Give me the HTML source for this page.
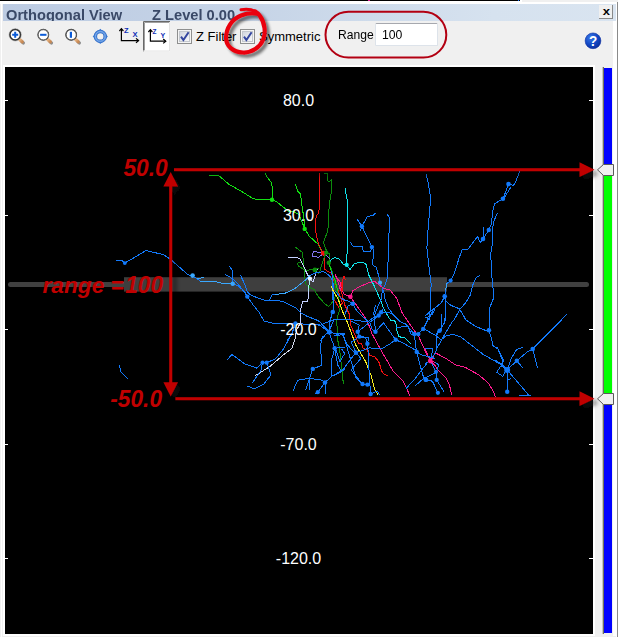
<!DOCTYPE html>
<html>
<head>
<meta charset="utf-8">
<title>Orthogonal View</title>
<style>
html,body{margin:0;padding:0;}
body{width:618px;height:637px;overflow:hidden;background:#f0f0f0;font-family:"Liberation Sans",sans-serif;position:relative;}
#topline{position:absolute;left:0;top:0;width:520px;height:1px;background:#000;}
#topgrey{position:absolute;left:522px;top:0;width:96px;height:2px;background:#f0f0f0;}
#topwhite{position:absolute;left:0;top:0;width:618px;height:4px;background:#fff;}
#frameL{position:absolute;left:1px;top:1px;width:1px;height:636px;background:#fff;}
#frameR{position:absolute;left:617px;top:2px;width:1px;height:635px;background:#8a8a8a;}
#frameR2{position:absolute;left:616px;top:2px;width:1px;height:635px;background:#fff;}
#frameR0{position:absolute;left:613px;top:21px;width:4px;height:615px;background:#fff;}
#title{position:absolute;left:3px;top:4px;width:613px;height:17px;overflow:hidden;
 background:linear-gradient(to right,#bccbe2 0%,#c6d4e7 40%,#d6e2ef 80%,#d9e4f0 100%);}
#title span{position:absolute;top:2px;font-weight:bold;font-size:15.2px;line-height:17px;color:#3a4967;white-space:nowrap;transform:scaleX(0.965);transform-origin:0 0;}
#closeb{position:absolute;left:599px;top:5px;width:14px;height:14px;background:#f0f0f0;border-right:1px solid #8a8a8a;border-bottom:1px solid #8a8a8a;box-sizing:border-box;}
#canvasframe{position:absolute;left:3px;top:65px;width:592px;height:571px;background:#fff;}
#canvas{position:absolute;left:5px;top:67px;width:588px;height:567px;background:#000;}
.tb{position:absolute;font-size:13px;color:#000;white-space:nowrap;}
.cb{position:absolute;width:13px;height:13px;box-sizing:border-box;border:1px solid #8e8f8f;background:#f4f4f4;box-shadow:inset 0 0 0 1px #f4f4f4, inset 0 0 0 2px #c9ccd0;}
#rangein{position:absolute;left:375px;top:23px;width:62.5px;height:23px;box-sizing:border-box;border:1px solid #dde3ea;border-top-color:#a6a8ae;border-radius:1.5px;background:#fff;}
#overlay{position:absolute;left:0;top:0;}
</style>
</head>
<body>
<div id="topwhite"></div>
<div id="topline"></div>
<div id="topgrey"></div>
<div id="title"><span style="left:2.5px">Orthogonal View</span><span style="left:148.5px">Z Level 0.00</span></div>
<div id="closeb"></div>
<div id="frameL"></div>
<div id="frameR0"></div>
<div id="frameR"></div>
<div id="frameR2"></div>

<div class="tb" style="left:196px;top:29px;">Z Filter</div>
<div class="tb" style="left:259px;top:29px;">Symmetric</div>
<div class="tb" style="left:338px;top:27px;transform:scaleX(0.93);transform-origin:0 0;">Range</div>
<div id="rangein"><div class="tb" style="left:5.5px;top:3px;transform:scaleX(0.94);transform-origin:0 0;">100</div></div>

<div id="canvasframe"></div>
<div id="canvas"></div>

<svg id="overlay" width="618" height="637" viewBox="0 0 618 637">
<!-- TOOLBAR ICONS -->
<defs>
 <linearGradient id="hg" x1="0" y1="0" x2="1" y2="1"><stop offset="0" stop-color="#e9b98a"/><stop offset="1" stop-color="#c88a55"/></linearGradient>
 <radialGradient id="helpg" cx="0.35" cy="0.3" r="0.8"><stop offset="0" stop-color="#3a78e8"/><stop offset="0.55" stop-color="#1248c4"/><stop offset="1" stop-color="#0a2a98"/></radialGradient>
 <linearGradient id="cbg" x1="0" y1="0" x2="1" y2="1"><stop offset="0" stop-color="#cfd4dd"/><stop offset="1" stop-color="#fbfbfc"/></linearGradient>
 <filter id="sh" x="-20%" y="-20%" width="150%" height="150%"><feGaussianBlur in="SourceAlpha" stdDeviation="1.6"/><feOffset dx="3" dy="3"/><feComponentTransfer><feFuncA type="linear" slope="0.55"/></feComponentTransfer><feMerge><feMergeNode/><feMergeNode in="SourceGraphic"/></feMerge></filter>
 <filter id="sh2" x="-5%" y="-5%" width="112%" height="112%"><feGaussianBlur in="SourceAlpha" stdDeviation="2.2"/><feOffset dx="4" dy="4" result="b"/><feFlood flood-color="#141414" flood-opacity="0.55"/><feComposite in2="b" operator="in"/><feMerge><feMergeNode/><feMergeNode in="SourceGraphic"/></feMerge></filter>
 <g id="mag">
  <path d="M6.6 6.8 L8.2 8.2" stroke="#8d8d8d" stroke-width="3.2" stroke-linecap="round"/>
  <path d="M4.2 4.4 L7 7" stroke="url(#hg)" stroke-width="3.3" stroke-linecap="round"/>
  <circle cx="0" cy="0" r="5.2" fill="#fff" stroke="#3c3c3c" stroke-width="1.5"/>
 </g>
</defs>
<g id="icons">
 <g transform="translate(15.2 34.8)"><use href="#mag"/><circle r="5.3" fill="#fff" stroke="#303030" stroke-width="1.5"/><circle r="6.2" fill="none" stroke="#9a9a9a" stroke-width="0.5"/><path d="M-3 0H3M0 -3V3" stroke="#0b5bd7" stroke-width="2"/></g>
 <g transform="translate(43.3 34.8)"><use href="#mag"/><circle r="5.1" fill="#fff" stroke="#666" stroke-width="1"/><path d="M-3.2 0H3.2" stroke="#0b5bd7" stroke-width="2"/></g>
 <g transform="translate(71.2 34.8)"><use href="#mag"/><circle r="5.1" fill="#fff" stroke="#555" stroke-width="1"/><path d="M-0.3 -3V3" stroke="#0b5bd7" stroke-width="2.2"/></g>
 <g transform="translate(100.3 36.4)">
  <path d="M0 -7.6 L2.6 -5 L-2.6 -5Z M0 7.6 L2.6 5 L-2.6 5Z M-7.6 0 L-5 -2.6 L-5 2.6Z M7.6 0 L5 -2.6 L5 2.6Z" fill="#3f7fd6"/>
  <circle r="4.9" fill="none" stroke="#2f68c2" stroke-width="3.4"/>
  <circle r="4.9" fill="none" stroke="#4a88dc" stroke-width="2.4"/>
  <circle r="4.9" fill="none" stroke="#86b0ea" stroke-width="0.9"/>
 </g>
 <!-- ZX axes -->
 <g stroke="#000" stroke-width="1.2" fill="none">
  <path d="M121.4 29 V40.6 H138.4"/>
  <path d="M119.4 31 L121.4 28.6 L123.4 31"/>
  <path d="M136 38.4 L138.6 40.6 L136 42.8"/>
 </g>
 <g font-family="'Liberation Sans',sans-serif" font-weight="bold" fill="#1030b8">
  <text x="124" y="33" font-size="7.5">Z</text>
  <text x="132.6" y="37.2" font-size="7.6">X</text>
 </g>
 <!-- ZY selected -->
 <rect x="143" y="21" width="27" height="30.5" fill="#fff"/>
 <path d="M143.5 51.5 V21.5 H170" stroke="#696969" stroke-width="1" fill="none"/>
 <path d="M144.5 50.5 V22.5 H169" stroke="#a0a0a0" stroke-width="1" fill="none"/>
 <path d="M143 51 H169.5 V22" stroke="#e3e3e3" stroke-width="1" fill="none"/>
 <g stroke="#000" stroke-width="1.2" fill="none">
  <path d="M150.4 30 V41.2 H165.6"/>
  <path d="M148.4 32 L150.4 29.6 L152.4 32"/>
  <path d="M163.2 39 L165.8 41.2 L163.2 43.4"/>
 </g>
 <g font-family="'Liberation Sans',sans-serif" font-weight="bold" fill="#1030b8">
  <text x="152.6" y="33.6" font-size="6.5">Z</text>
  <text x="160.6" y="38.2" font-size="7">Y</text>
 </g>
 <!-- checkboxes -->
 <g id="cb1">
  <rect x="177.5" y="29.5" width="14" height="14" fill="#f4f4f4" stroke="#8e8f8f"/>
  <rect x="179.5" y="31.5" width="10" height="10" fill="url(#cbg)" stroke="#c4c8ce" stroke-width="1"/>
  <path d="M181 36.6 L183.4 40 L188.6 32.2" stroke="#35479f" stroke-width="2" fill="none"/>
 </g>
 <g id="cb2">
  <rect x="240.5" y="29.5" width="14" height="14" fill="#f4f4f4" stroke="#8e8f8f"/>
  <rect x="242.5" y="31.5" width="10" height="10" fill="url(#cbg)" stroke="#c4c8ce" stroke-width="1"/>
  <path d="M244 36.6 L246.4 40 L251.6 32.2" stroke="#35479f" stroke-width="2" fill="none"/>
 </g>
 <!-- help -->
 <circle cx="593" cy="40.8" r="8.6" fill="#fbfbfb"/>
 <circle cx="593" cy="40.8" r="7.9" fill="url(#helpg)" stroke="#0d2f9c" stroke-width="0.6"/>
 <text transform="translate(593.1 46.3) scale(0.9 1)" font-family="'Liberation Sans',sans-serif" font-weight="bold" font-size="15" fill="#fff" text-anchor="middle">?</text>
 <!-- close x -->
 <text transform="translate(606.5 15) scale(1.13 1)" font-family="'Liberation Sans',sans-serif" font-weight="bold" font-size="11.6" fill="#000" text-anchor="middle">x</text>
 <!-- red annotations in toolbar -->
 <g filter="url(#sh)" fill="none" stroke="#ea0010" stroke-linecap="round" stroke-linejoin="round">
  <path d="M241 9.7 C246 8.8 251 9 255 11.4" stroke-width="3"/>
  <path d="M255 11.4 C257 12.6 258.8 14.2 260 16 C265 23 266 33 263 40 C260 47 252 53 243 52.5 C233 52 226 46 226 38 C226 28 232 19 241 15.5 C247 13.2 252 12.6 257 13.8" stroke-width="4.2"/>
 </g>
 <rect x="325.5" y="11.8" width="120.8" height="45.8" rx="22.9" ry="22.9" fill="none" stroke="#b30012" stroke-width="2"/>
 <rect x="368" y="0" width="2" height="1" fill="#e0209a"/><rect x="518" y="0" width="1" height="1" fill="#1070ff"/>
</g>
<!-- SLIDER -->
<g id="slider">
 <rect x="602" y="67" width="1" height="567" fill="#c4c4c4"/><rect x="603" y="67" width="1" height="567" fill="#6c6c5c"/>
 <rect x="604" y="68" width="8" height="565" fill="#0000ff"/>
 <rect x="604" y="170" width="8" height="229" fill="#00ff00"/>
 <path d="M597.5 169.8 L603.5 164.5 H613.5 V175.5 H603.5 Z" fill="#f0f0f0" stroke="#5a5a5a" stroke-width="1"/>
 <path d="M597.5 398.8 L603.5 393.5 H613.5 V404.5 H603.5 Z" fill="#f0f0f0" stroke="#5a5a5a" stroke-width="1"/>
</g>
<!-- BAND -->
<g id="band">
 <line x1="10.5" y1="284.5" x2="586.5" y2="284.5" stroke="#404040" stroke-width="5" stroke-linecap="round"/>
 <rect x="124" y="277.2" width="323" height="14.4" fill="#3e3e3e"/>
</g>
<!-- TRACES -->
<g id="traces" fill="none" stroke-width="1" stroke-linejoin="round" stroke-linecap="butt" shape-rendering="crispEdges">
<path d="M208.9 175.5 L218.6 175.5 L229.1 184.4 L242.0 191.7 L251.8 197.8 L255.8 199.3 L269.6 199.3 L272.0 199.8 L276.0 201.4 L285.0 208.4 L288.2 211.1 L293.9 211.6 L298.7 214.5 L302.0 222.0 L304.7 228.9" stroke="#12e012"/>
<path d="M272.0 199.8 L272.3 187.6 L270.9 182.0 L267.2 177.1 L265.0 173.1" stroke="#12e012"/>
<path d="M295.5 184.1 L297.6 190.9 L300.4 194.1 L302.0 205.5 L304.1 220.0 L304.7 228.9 L309.3 236.2 L318.2 244.3 L321.0 250.3 L323.1 253.1" stroke="#12e012"/>
<path d="M319.5 173.1 L319.5 207.9 L318.2 213.5 L316.1 216.0 L315.3 229.7 L316.6 236.2 L318.5 244.3 L320.3 247.5 L323.1 253.1 L324.8 257.7 L324.3 269.0 L328.2 271.8 L331.6 273.5 L333.9 280.3 L338.4 291.0 L340.1 296.3 L342.4 303.1 L338.4 307.1 L334.5 299.7" stroke="#f41010"/>
<path d="M324.3 173.9 L327.4 173.5 L327.9 181.2 L329.5 181.2 L331.4 179.6 L331.9 189.3 L330.3 197.4 L328.7 211.9 L327.9 231.3 L324.6 238.6 L323.7 242.9 L326.5 250.9 L326.2 252.6 L329.4 253.7 L329.9 258.8 L328.8 262.7 L331.6 270.1 L333.9 278.0 L336.2 291.8 L337.9 291.8 L340.1 307.7 L336.7 320.1 L337.9 341.0 L339.6 349.1 L343.4 384.1" stroke="#0c8c0c"/>
<path d="M326.2 252.6 L323.7 258.8 L320.9 267.8 L319.7 272.4 L318.0 274.1" stroke="#0c8c0c"/>
<path d="M295.4 247.1 L302.5 252.6 L303.9 267.8 L304.7 270.1 L314.9 269.9 L318.6 268.4" stroke="#0c8c0c"/>
<path d="M300.5 262.0 L297.7 263.1 L298.2 266.1 L305.0 270.1 L304.7 276.9 L305.6 283.7 L310.1 287.7 L314.1 289.5 L318.0 296.3 L324.8 303.7 L328.8 306.5 L334.5 299.7 L336.2 291.8" stroke="#0c8c0c"/>
<path d="M329.4 264.4 L331.6 272.4 L335.0 280.3 L337.9 291.0" stroke="#12e012"/>
<path d="M288.0 257.4 L297.1 257.4 L299.9 258.8 L302.7 264.4 L307.8 275.2 L309.9 278.6 L312.9 282.0 L317.5 269.0" stroke="#c4d0ff"/>
<path d="M309.9 278.6 L309.0 284.8 L308.7 291.0" stroke="#a0f0f0"/>
<path d="M308.7 291.0 L307.8 301.4 L302.7 301.8 L301.6 305.4 L300.1 312.2 L300.1 323.5" stroke="#c4d0ff"/>
<path d="M300.1 323.5 L296.5 330.3 L294.9 339.4 L292.0 348.2 L283.3 355.0 L269.7 366.6 L261.9 371.5 L255.1 375.7" stroke="#d4dcf0"/>
<path d="M323.1 253.1 L313.5 251.4 L312.4 254.8 L312.9 256.7 L318.6 257.1 L322.6 254.3" stroke="#8676f0"/>
<path d="M326.5 255.4 L330.5 259.3" stroke="#8676f0"/>
<path d="M345.4 188.0 L346.5 198.2 L347.8 199.8 L347.6 235.0 L346.7 264.9" stroke="#10e4ec"/>
<path d="M328.8 262.7 L329.9 261.6 L332.8 258.2 L335.0 257.7 L339.6 259.3 L343.9 264.9 L346.7 264.9 L349.9 269.5 L354.4 263.8 L360.1 262.2 L365.7 263.3 L369.0 275.5 L374.6 286.8 L380.3 299.7 L383.5 307.8 L388.4 317.1 L390.8 320.4 L395.7 321.2 L396.5 329.3 L398.9 336.6 L405.4 338.2 L411.1 343.8" stroke="#10e4ec"/>
<path d="M375.6 213.1 L373.2 215.2 L367.5 216.5 L361.9 226.2 L360.2 231.3" stroke="#1279fa"/>
<path d="M357.0 219.2 L361.9 226.2 L365.9 234.6 L369.8 242.3 L371.9 247.1 L373.8 250.4 L372.5 264.9 L376.3 267.4 L379.5 278.7 L380.0 282.7 L382.7 288.4 L381.1 299.7 L378.7 304.6 L374.6 315.0" stroke="#1279fa"/>
<path d="M350.4 242.3 L352.5 246.0 L362.5 246.7 L363.3 251.2 L370.6 251.2 L371.9 247.1" stroke="#1279fa"/>
<path d="M387.0 213.9 L389.4 217.6 L389.4 232.2 L388.3 234.6 L388.4 259.3 L387.1 267.4 L387.6 277.1 L384.4 286.8 L381.9 290.0 L383.5 290.0 L385.2 299.7 L388.4 307.8 L393.3 315.0 L399.7 321.2 L406.2 324.4 L414.3 334.1" stroke="#1279fa"/>
<path d="M426.1 174.4 L428.3 182.8 L430.2 195.7 L430.2 203.8 L429.1 216.8 L427.9 231.3 L426.9 247.9 L429.0 267.4 L431.1 283.5 L430.7 299.7 L429.5 320.0" stroke="#1279fa"/>
<path d="M435.0 308.6 L432.0 315.0" stroke="#1279fa"/>
<path d="M519.9 171.1 L515.8 181.2 L513.4 185.7 L511.0 184.4 L508.5 184.1 L504.5 195.0 L502.9 198.7 L494.8 203.8 L493.2 208.7 L491.1 224.9 L488.8 230.0 L483.0 239.0 L480.2 242.3 L477.6 236.6 L467.9 249.2 L462.2 249.6 L459.8 256.0 L454.1 273.8 L450.6 280.6 L446.8 283.5 L445.7 290.0 L444.7 296.2 L446.0 301.3 L450.9 305.4 L459.0 308.6 L463.8 315.9 L465.5 319.7 L475.2 326.2 L484.9 330.2 L488.9 330.2" stroke="#1279fa"/>
<path d="M511.0 186.8 L504.5 197.4 L502.9 198.7" stroke="#1279fa"/>
<path d="M483.8 226.8 L483.8 239.0" stroke="#1279fa"/>
<path d="M497.5 213.1 L494.0 220.8 L492.4 229.7 L492.2 245.0 L490.5 254.4 L491.7 267.4 L492.2 283.5 L493.8 291.6 L493.0 299.7 L489.7 307.8 L489.4 320.0 L488.9 330.2 L491.3 337.5 L493.0 345.6 L497.8 348.8 L503.5 360.2 L501.0 365.8 L507.2 369.9" stroke="#1279fa"/>
<path d="M446.8 283.5 L445.7 290.0" stroke="#3aa8ff"/>
<path d="M444.7 296.2 L441.2 303.0 L433.1 309.4 L425.0 315.9" stroke="#1279fa"/>
<path d="M444.7 296.2 L445.7 304.6 L445.2 320.0 L444.4 322.9 L437.1 334.3" stroke="#1279fa"/>
<path d="M441.2 313.5 L441.2 330.7" stroke="#1279fa"/>
<path d="M480.0 275.1 L476.0 277.9 L472.7 285.2 L470.3 294.9 L465.5 303.0 L459.8 309.4 L454.1 320.0 L452.5 321.3 L442.8 337.5 L437.1 348.0 L435.5 352.9" stroke="#1279fa"/>
<path d="M460.6 310.0 L465.5 319.7" stroke="#1279fa"/>
<path d="M116.2 260.2 L121.8 260.5 L124.8 263.1 L146.1 250.5 L163.1 254.6 L169.6 258.6 L188.2 274.8 L192.6 275.9 L197.1 278.8 L200.4 281.3" stroke="#1279fa"/>
<path d="M200.4 281.3 L215.7 281.7 L225.5 284.0 L232.7 283.7" stroke="#3aa8ff"/>
<path d="M197.1 278.8 L199.6 278.3 L203.6 277.5" stroke="#3aa8ff"/>
<path d="M232.7 283.7 L233.0 278.0 L232.4 270.7 L229.5 265.9" stroke="#1279fa"/>
<path d="M225.1 274.3 L232.7 278.8 L237.6 283.7 L241.6 288.5 L247.3 296.6 L253.0 304.7 L259.4 312.8 L263.5 320.0 L263.8 321.0" stroke="#1279fa"/>
<path d="M232.7 283.7 L238.4 286.1 L244.1 291.0 L247.3 296.6" stroke="#1279fa"/>
<path d="M240.3 274.8 L244.1 282.9 L247.3 291.8 L249.7 294.2 L256.2 297.4 L264.3 300.2 L269.1 300.7 L272.4 294.2 L275.0 294.6" stroke="#1279fa"/>
<path d="M275.0 294.6 L286.3 292.9 L294.3 289.0 L299.3 285.0 L304.4 280.9 L311.2 274.6" stroke="#3aa8ff"/>
<path d="M311.2 274.6 L315.8 272.9 L318.6 272.9 L322.6 271.2 L326.0 272.9 L330.5 276.9 L332.8 281.4 L333.9 291.0 L333.9 302.0 L332.8 312.0 L329.4 322.4 L329.4 332.0" stroke="#1279fa"/>
<path d="M269.1 300.7 L277.2 300.2 L285.0 302.3 L289.7 304.8 L296.5 308.2 L300.5 312.7 L307.8 316.7 L315.8 319.5 L320.3 322.4 L328.2 330.9 L329.4 332.0" stroke="#1279fa"/>
<path d="M331.6 271.2 L332.8 280.3 L332.5 291.0 L333.0 300.0" stroke="#1279fa"/>
<path d="M263.8 321.0 L273.5 323.5 L295.3 323.5 L320.3 325.2 L328.2 321.8 L336.2 319.0 L345.0 319.0" stroke="#1279fa"/>
<path d="M295.3 323.5 L291.0 335.5 L283.3 349.1 L275.5 358.8 L266.7 362.7 L262.5 362.7 L257.0 368.2 L244.4 363.7 L236.7 357.9 L231.8 354.6 L227.3 359.8" stroke="#1279fa"/>
<path d="M262.5 362.7 L260.9 370.5 L252.2 383.1" stroke="#1279fa"/>
<path d="M266.7 362.7 L269.7 370.5 L270.6 375.3 L263.8 384.1 L254.1 388.9 L247.3 386.0" stroke="#1279fa"/>
<path d="M286.9 341.0 L292.0 333.7 L295.4 324.6" stroke="#1279fa"/>
<path d="M318.0 324.0 L328.2 331.4" stroke="#1279fa"/>
<path d="M341.8 297.5 L345.0 300.3" stroke="#1279fa"/>
<path d="M320.3 341.0 L328.2 331.4" stroke="#1279fa"/>
<path d="M329.4 332.0 L337.3 334.3 L345.0 333.1" stroke="#1279fa"/>
<path d="M318.2 320.0 L328.9 331.7 L322.1 337.5 L320.1 347.2 L321.7 358.8 L321.1 365.6 L312.8 368.9 L309.5 378.3 L297.8 380.2 L293.0 390.9" stroke="#1279fa"/>
<path d="M309.5 378.3 L322.1 380.2 L325.0 382.5 L318.2 391.8 L315.3 393.8" stroke="#1279fa"/>
<path d="M309.5 378.3 L305.6 389.9" stroke="#1279fa"/>
<path d="M309.5 378.3 L309.9 389.9" stroke="#1279fa"/>
<path d="M325.0 382.5 L326.0 393.8" stroke="#1279fa"/>
<path d="M325.0 382.5 L331.8 376.3 L341.5 371.5 L345.0 369.0" stroke="#1279fa"/>
<path d="M333.7 320.0 L328.9 331.7 L334.7 348.2 L331.4 360.8 L331.8 376.3" stroke="#1279fa"/>
<path d="M334.7 348.2 L337.6 364.7 L341.5 371.5" stroke="#1279fa"/>
<path d="M334.7 348.2 L345.0 347.2" stroke="#1279fa"/>
<path d="M333.7 335.5 L345.0 334.6" stroke="#1279fa"/>
<path d="M119.7 365.2 L120.4 371.7 L127.8 378.8" stroke="#1279fa"/>
<path d="M335.0 274.6 L336.6 277.1 L339.9 281.9 L341.5 288.4 L343.9 294.1 L350.4 296.8 L352.8 290.8 L359.3 286.8 L369.0 282.7 L374.6 281.4 L383.5 288.4 L390.0 290.0 L396.5 298.1 L399.7 306.2 L402.2 313.1 L411.1 326.0 L419.1 337.4 L425.6 351.9 L430.5 360.8 L435.5 352.9 L446.0 358.5 L455.7 365.0 L465.5 367.4 L478.4 374.7 L488.1 382.8 L493.0 390.9 L495.4 396.6" stroke="#ff1a90"/>
<path d="M350.4 296.8 L356.0 304.6 L363.3 315.0 L367.4 321.2 L372.2 334.1 L381.9 351.9 L393.3 371.3 L403.0 381.1 L407.0 389.1 L410.2 396.4" stroke="#ff1a90"/>
<path d="M335.0 274.6 L338.4 282.6 L340.7 291.0" stroke="#ff1a90"/>
<path d="M425.0 348.8 L430.2 361.0 L434.7 365.0 L437.9 369.9 L446.0 378.0 L449.3 384.4 L451.7 395.0" stroke="#ff1a90"/>
<path d="M430.5 360.8 L435.0 362.4" stroke="#ff1a90"/>
<path d="M345.5 280.3 L343.9 276.7 L341.5 283.5 L342.3 288.4 L343.0 291.0" stroke="#f41010"/>
<path d="M344.1 276.3 L342.4 280.3 L343.0 284.8 L341.3 291.0 L344.7 305.0 L349.6 314.7 L350.4 324.4 L355.2 335.7 L358.5 343.0 L361.7 343.0 L362.5 347.9 L367.4 350.3 L369.8 355.2 L374.6 356.8 L378.7 361.6 L381.9 371.3 L384.4 374.6 L387.6 375.4" stroke="#f41010"/>
<path d="M331.1 286.5 L333.3 291.0 L338.4 299.7 L344.1 315.6 L346.3 319.6 L356.0 345.5 L365.7 361.6 L371.4 376.2 L374.6 389.1 L377.9 394.8" stroke="#f8f020"/>
<path d="M335.0 290.8 L341.5 298.9 L347.1 300.5 L352.8 303.8 L356.0 309.4 L356.0 309.9 L364.1 317.9 L369.8 322.8 L372.2 329.3 L375.5 331.7 L383.5 322.8 L395.7 339.8" stroke="#1279fa"/>
<path d="M352.8 303.8 L348.0 306.2 L344.7 315.0" stroke="#1279fa"/>
<path d="M335.0 333.3 L341.5 333.3 L348.0 345.5 L354.4 352.7 L356.0 352.7 L360.9 351.1 L369.0 347.9 L381.9 348.7 L390.0 343.8 L395.7 339.8 L403.0 343.0 L415.9 350.3 L416.7 351.9 L422.4 355.2 L435.0 358.4" stroke="#1279fa"/>
<path d="M335.0 319.6 L351.2 319.6 L367.4 322.0 L375.5 316.3 L378.7 315.5 L381.1 312.3 L383.5 308.2" stroke="#1279fa"/>
<path d="M351.2 321.2 L359.3 325.2 L357.7 331.7 L359.3 336.6 L365.7 338.2 L367.4 343.8 L368.2 351.9 L369.0 369.7 L369.8 382.7 L370.6 394.0" stroke="#1279fa"/>
<path d="M375.5 305.0 L373.8 313.1 L375.5 331.7" stroke="#1279fa"/>
<path d="M381.1 312.3 L391.6 313.1 L399.7 321.2" stroke="#1279fa"/>
<path d="M414.3 334.1 L418.3 334.1 L423.2 328.9 L428.9 317.9 L435.0 309.9" stroke="#1279fa"/>
<path d="M396.5 327.7 L407.8 326.0 L411.1 334.1 L414.3 334.1 L415.9 347.1 L416.7 351.9 L419.1 361.6 L423.2 376.2 L425.6 379.8 L432.1 381.1 L435.0 385.9" stroke="#1279fa"/>
<path d="M435.0 353.5 L425.6 364.9 L415.9 377.8 L406.2 388.3" stroke="#1279fa"/>
<path d="M435.0 373.0 L422.4 379.4 L415.1 385.9" stroke="#1279fa"/>
<path d="M335.0 374.6 L343.1 369.7 L351.2 358.4 L356.0 352.7 L351.2 342.2 L359.3 336.6" stroke="#1279fa"/>
<path d="M343.1 334.1 L351.2 361.6 L356.0 377.8 L362.5 384.0 L367.4 384.6" stroke="#1279fa"/>
<path d="M335.0 347.1 L339.9 361.6 L344.7 353.5 L341.5 348.7" stroke="#1279fa"/>
<path d="M367.4 343.8 L369.0 337.4 L359.3 336.6" stroke="#1279fa"/>
<path d="M357.7 331.7 L375.5 317.9 L378.7 315.5" stroke="#1279fa"/>
<path d="M356.0 352.7 L360.9 358.4 L351.2 369.7 L356.0 376.2 L360.0 381.0 L362.5 384.0" stroke="#1279fa"/>
<path d="M371.4 394.0 L377.0 390.8 L380.3 395.6" stroke="#1279fa"/>
<path d="M441.2 339.9 L446.0 335.9 L452.5 334.3 L460.6 336.7 L471.9 345.6 L483.3 354.5 L496.2 361.8 L504.3 366.6 L507.2 369.9" stroke="#1279fa"/>
<path d="M501.0 365.8 L496.7 372.3 L502.7 376.3 L505.1 372.3" stroke="#1279fa"/>
<path d="M507.2 369.9 L507.2 391.7" stroke="#1279fa"/>
<path d="M507.2 369.9 L519.3 384.1 L529.0 395.5" stroke="#1279fa"/>
<path d="M519.3 395.5 L530.6 395.5" stroke="#1279fa"/>
<path d="M507.2 369.9 L511.2 358.3 L516.8 349.4 L522.5 347.4" stroke="#1279fa"/>
<path d="M507.2 369.9 L516.8 360.7 L527.4 351.8 L532.7 349.0 L546.8 334.8 L567.0 314.2" stroke="#1279fa"/>
<path d="M532.7 349.0 L534.6 356.6 L537.4 367.6" stroke="#1279fa"/>
<path d="M516.8 360.7 L522.5 367.6" stroke="#1279fa"/>
<path d="M508.0 380.1 L511.2 378.5" stroke="#1279fa"/>
<path d="M495.0 346.9 L497.4 347.7 L503.1 361.5 L501.5 365.5" stroke="#1279fa"/>
<path d="M495.0 359.9 L503.1 365.5 L507.2 369.9" stroke="#1279fa"/>
<path d="M425.0 329.4 L436.3 335.9 L441.2 339.9" stroke="#1279fa"/>
<path d="M437.1 331.0 L436.3 350.5 L435.5 352.9" stroke="#1279fa"/>
<path d="M446.0 310.0 L444.4 322.9" stroke="#1279fa"/>
<path d="M433.1 310.0 L429.9 316.5 L425.0 318.1" stroke="#1279fa"/>
<path d="M428.2 318.0 L425.0 326.2" stroke="#1279fa"/>
<path d="M430.2 361.0 L436.0 371.8 L436.7 379.9 L444.4 392.5" stroke="#1279fa"/>
<path d="M426.3 379.9 L432.3 381.2 L437.9 392.8" stroke="#1279fa"/>
<path d="M425.0 363.4 L430.2 361.0 L433.0 348.8 L425.0 348.0" stroke="#1279fa"/>
<path d="M434.7 361.8 L438.8 365.0 L437.1 369.9" stroke="#1279fa"/>
<g shape-rendering="geometricPrecision" stroke="none">
<circle cx="272.0" cy="199.8" r="2.2" fill="#12e012"/>
<circle cx="304.7" cy="228.9" r="2.2" fill="#12e012"/>
<circle cx="323.1" cy="253.1" r="2.3" fill="#f41010"/>
<circle cx="326.2" cy="252.6" r="2.2" fill="#0c8c0c"/>
<circle cx="328.8" cy="262.7" r="2.2" fill="#0c8c0c"/>
<circle cx="314.9" cy="269.9" r="2.4" fill="#0c8c0c"/>
<circle cx="309.9" cy="278.6" r="2.2" fill="#e8f4ff"/>
<circle cx="346.7" cy="264.9" r="2.1" fill="#10e4ec"/>
<circle cx="361.9" cy="226.2" r="2.2" fill="#1279fa"/>
<circle cx="371.9" cy="247.1" r="2.2" fill="#1279fa"/>
<circle cx="380.0" cy="282.7" r="2.1" fill="#3aa8ff"/>
<circle cx="508.5" cy="184.1" r="2.3" fill="#1279fa"/>
<circle cx="502.9" cy="198.7" r="2.3" fill="#1279fa"/>
<circle cx="488.8" cy="230.0" r="2.2" fill="#1279fa"/>
<circle cx="483.0" cy="239.0" r="2.3" fill="#1279fa"/>
<circle cx="450.6" cy="280.6" r="2.1" fill="#1279fa"/>
<circle cx="444.7" cy="296.2" r="2.3" fill="#1279fa"/>
<circle cx="488.9" cy="330.2" r="2.3" fill="#1279fa"/>
<circle cx="439.6" cy="330.7" r="2.2" fill="#1279fa"/>
<circle cx="124.8" cy="263.1" r="1.9" fill="#1279fa"/>
<circle cx="192.6" cy="275.6" r="2.3" fill="#3aa8ff"/>
<circle cx="232.7" cy="283.7" r="2.2" fill="#3aa8ff"/>
<circle cx="247.3" cy="296.6" r="2.2" fill="#1279fa"/>
<circle cx="332.8" cy="312.0" r="2.3" fill="#1279fa"/>
<circle cx="329.4" cy="332.0" r="2.5" fill="#1279fa"/>
<circle cx="295.4" cy="323.5" r="2.2" fill="#1279fa"/>
<circle cx="266.7" cy="362.7" r="2.1" fill="#1279fa"/>
<circle cx="262.5" cy="362.7" r="2.1" fill="#1279fa"/>
<circle cx="312.8" cy="368.9" r="2.2" fill="#1279fa"/>
<circle cx="325.0" cy="382.5" r="2.3" fill="#1279fa"/>
<circle cx="317.8" cy="392.2" r="2.1" fill="#1279fa"/>
<circle cx="334.7" cy="348.2" r="2.2" fill="#1279fa"/>
<circle cx="350.4" cy="296.8" r="2.3" fill="#ff1a90"/>
<circle cx="430.3" cy="361.0" r="2.4" fill="#ff1a90"/>
<circle cx="352.8" cy="303.8" r="2.3" fill="#1279fa"/>
<circle cx="381.1" cy="312.3" r="2.2" fill="#1279fa"/>
<circle cx="378.7" cy="315.5" r="2.2" fill="#1279fa"/>
<circle cx="357.7" cy="331.7" r="2.2" fill="#1279fa"/>
<circle cx="359.3" cy="336.6" r="2.2" fill="#1279fa"/>
<circle cx="375.5" cy="331.7" r="2.2" fill="#1279fa"/>
<circle cx="367.4" cy="343.8" r="2.2" fill="#1279fa"/>
<circle cx="395.7" cy="339.8" r="2.2" fill="#1279fa"/>
<circle cx="414.3" cy="334.1" r="2.2" fill="#1279fa"/>
<circle cx="418.3" cy="334.1" r="2.2" fill="#1279fa"/>
<circle cx="423.2" cy="328.9" r="2.2" fill="#1279fa"/>
<circle cx="416.7" cy="351.9" r="2.2" fill="#1279fa"/>
<circle cx="356.0" cy="352.7" r="2.2" fill="#1279fa"/>
<circle cx="362.5" cy="384.0" r="2.2" fill="#1279fa"/>
<circle cx="367.4" cy="384.6" r="2.2" fill="#1279fa"/>
<circle cx="370.6" cy="394.0" r="2.2" fill="#1279fa"/>
<circle cx="425.6" cy="379.8" r="2.2" fill="#1279fa"/>
<circle cx="507.2" cy="369.9" r="3.0" fill="#1279fa"/>
<circle cx="516.8" cy="360.7" r="2.2" fill="#1279fa"/>
<circle cx="532.7" cy="349.0" r="2.3" fill="#1279fa"/>
<circle cx="507.2" cy="391.8" r="2.2" fill="#1279fa"/>
<circle cx="436.0" cy="371.8" r="2.1" fill="#1279fa"/>
<circle cx="436.7" cy="379.9" r="2.1" fill="#1279fa"/>
<circle cx="426.3" cy="379.9" r="2.1" fill="#1279fa"/>
<circle cx="437.9" cy="392.8" r="2.1" fill="#1279fa"/>
</g >
</g>
<!-- AXIS -->
<g id="axis" fill="#fff" font-family="'Liberation Sans',sans-serif" font-size="16" text-anchor="middle">
 <g stroke="#fff" stroke-width="1" shape-rendering="crispEdges">
  <path d="M5 100.5h3M5 215.5h3M5 329.5h3M5 444.5h3M5 558.5h3"/>
  <path d="M589 100.5h4M589 215.5h4M589 329.5h4M589 444.5h4M589 558.5h4"/>
 </g>
 <text x="298.5" y="106">80.0</text>
 <text x="298.5" y="220.7">30.0</text>
 <text x="298.5" y="335.3">-20.0</text>
 <text x="298.5" y="450">-70.0</text>
 <text x="298.5" y="564.3">-120.0</text>
</g>
<!-- ANNOT -->
<g id="annot" fill="#c00000" stroke="none">
 <g filter="url(#sh2)">
 <rect x="174" y="168.2" width="408" height="3"/>
 <path d="M579.5 162.3 L594.5 169.7 L579.5 177 Z"/>
 <rect x="175.4" y="397.2" width="406.6" height="3"/>
 <path d="M579.5 391.3 L594.5 398.7 L579.5 406 Z"/>
 <rect x="169.2" y="184" width="3" height="200"/>
 <path d="M163.4 186.4 L170.7 172 L178 186.4 Z"/>
 <path d="M163.4 382.2 L170.7 396.6 L178 382.2 Z"/>
 </g>
 <g font-family="'Liberation Sans',sans-serif" font-weight="bold" font-style="italic" font-size="22.7">
  <text transform="translate(123.5 176) scale(1 1.07)">50.0</text>
  <text transform="translate(110.3 407) scale(1 1.07)">-50.0</text>
  <text transform="translate(42.5 292.6)">range =</text>
  <text transform="translate(125.2 292.8) scale(1 1.07)">100</text>
 </g>
</g>
</svg>
</body>
</html>
